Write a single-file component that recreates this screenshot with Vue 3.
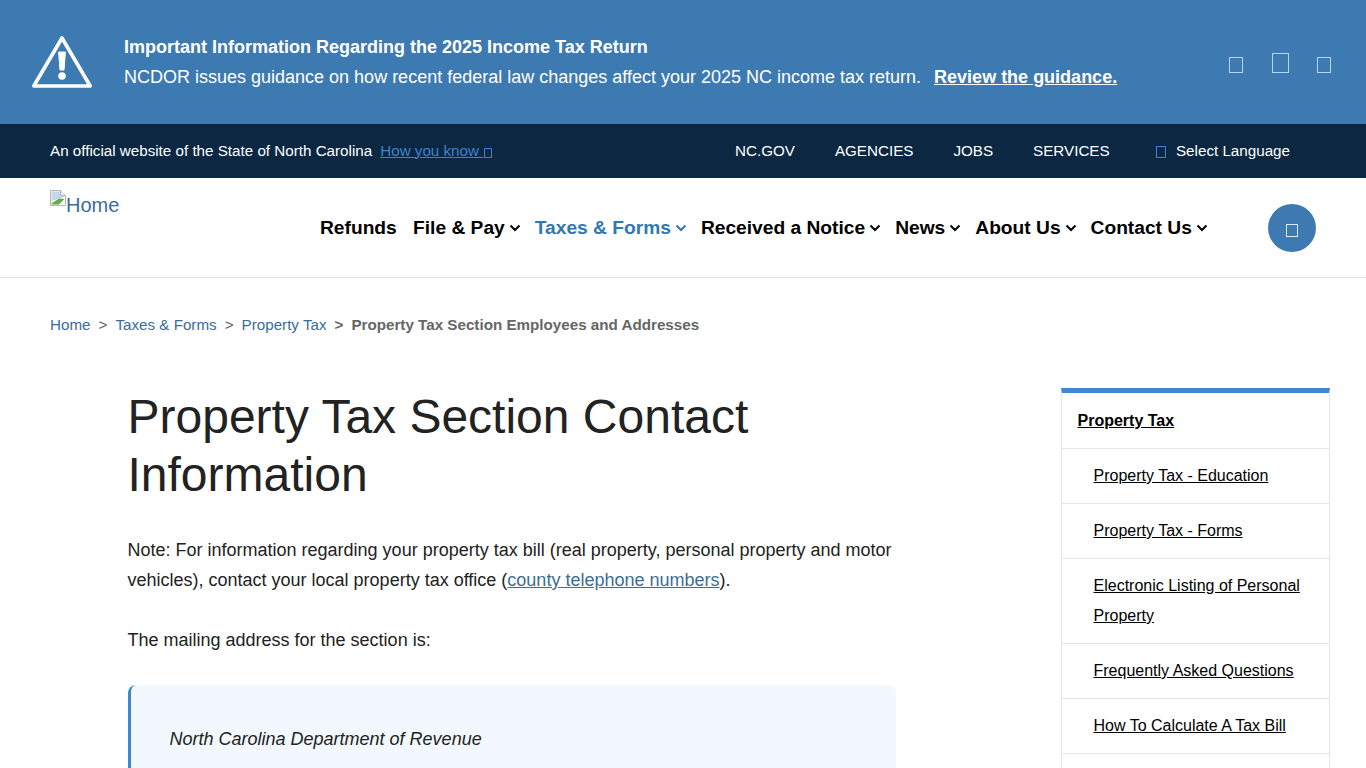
<template>
  <div class="page">
    <section class="alert">
      <svg class="alert-icon" width="62" height="54" viewBox="0 0 62 54">
        <path d="M31 3 L59.2 51 L2.8 51 Z" fill="none" stroke="#fff" stroke-width="3.6" stroke-linejoin="round" />
        <path d="M27.6 17 h6.8 l-1.4 18 h-4 z" fill="#fff" stroke="#fff" stroke-width="1" stroke-linejoin="round" />
        <circle cx="31" cy="41" r="3.8" fill="#fff" />
      </svg>
      <div class="alert-text">
        <div class="alert-title">Important Information Regarding the 2025 Income Tax Return</div>
        <div class="alert-body">
          NCDOR issues guidance on how recent federal law changes affect your 2025 NC income tax return.
          <a class="alert-link">Review the guidance.</a>
        </div>
      </div>
      <div class="alert-controls">
        <span class="glyph glyph-alert"></span>
        <span class="glyph glyph-alert glyph-big"></span>
        <span class="glyph glyph-alert"></span>
      </div>
    </section>

    <div class="topbar">
      <div class="official">
        <span>An official website of the State of North Carolina</span>
        <a class="know">How you know <span class="glyph glyph-know"></span></a>
      </div>
      <div class="toplinks">
        <a v-for="link in topLinks" :key="link">{{ link }}</a>
      </div>
      <div class="lang">
        <span class="glyph glyph-lang"></span>
        <span>Select Language</span>
      </div>
    </div>

    <header class="header">
      <a class="logo">
        <svg class="broken" width="16" height="16" viewBox="0 0 16 16">
          <path d="M0.5 0.5 H10.5 L15.5 5.5 V15.5 H0.5 Z" fill="#fff" stroke="#b5b5b5" />
          <path d="M10.5 0.5 V5.5 H15.5" fill="#f2f2f2" stroke="#b5b5b5" />
          <path d="M1.5 1.5 H10 V6 H14.5 V7 L1.5 11 Z" fill="#c6d5ea" />
          <path d="M1.5 14.5 V13.5 L9 8.5 L14.5 9 L9 14.5 Z" fill="#5fae4a" />
        </svg><span>Home</span>
      </a>
      <nav class="nav">
        <a v-for="item in navItems" :key="item.label" class="nav-item" :class="{ active: item.active }">
          {{ item.label }}
          <svg v-if="item.menu" width="12" height="8" viewBox="0 0 12 8">
            <path d="M1.5 1.5 L6 6 L10.5 1.5" fill="none" stroke="currentColor" stroke-width="2" />
          </svg>
        </a>
      </nav>
      <button class="search"><span class="glyph glyph-search"></span></button>
    </header>

    <div class="crumbs">
      <a>Home</a><i>&gt;</i>
      <a>Taxes &amp; Forms</a><i>&gt;</i>
      <a>Property Tax</a><i class="strong">&gt;</i>
      <b>Property Tax Section Employees and Addresses</b>
    </div>

    <div class="content">
      <main class="main">
        <h1>Property Tax Section Contact Information</h1>
        <p>
          Note: For information regarding your property tax bill (real property, personal property and motor
          vehicles), contact your local property tax office (<a>county telephone numbers</a>).
        </p>
        <p>The mailing address for the section is:</p>
        <blockquote>
          <em>North Carolina Department of Revenue</em>
        </blockquote>
      </main>
      <aside class="side">
        <a class="side-item side-head"><span>Property Tax</span></a>
        <a v-for="item in sideItems" :key="item" class="side-item"><span>{{ item }}</span></a>
      </aside>
    </div>
  </div>
</template>

<script setup>
const topLinks = ['NC.GOV', 'AGENCIES', 'JOBS', 'SERVICES']

const navItems = [
  { label: 'Refunds' },
  { label: 'File & Pay', menu: true },
  { label: 'Taxes & Forms', menu: true, active: true },
  { label: 'Received a Notice', menu: true },
  { label: 'News', menu: true },
  { label: 'About Us', menu: true },
  { label: 'Contact Us', menu: true },
]

const sideItems = [
  'Property Tax - Education',
  'Property Tax - Forms',
  'Electronic Listing of Personal Property',
  'Frequently Asked Questions',
  'How To Calculate A Tax Bill',
]
</script>

<style>
html,
body {
  margin: 0;
  overflow: hidden;
}
</style>

<style scoped>
.page {
  height: 768px;
  overflow: hidden;
  background: #fff;
  color: #222;
  font-family: "Liberation Sans", Arial, sans-serif;
}

a {
  cursor: pointer;
}

.glyph {
  display: inline-block;
  box-sizing: border-box;
  border: 1px solid currentColor;
}

.alert {
  height: 124px;
  box-sizing: border-box;
  display: flex;
  align-items: center;
  padding: 0 35px 0 31px;
  background: #3e7ab2;
  color: #fff;
}

.alert-icon {
  flex: none;
  margin-right: 31px;
}

.alert-text {
  flex: 1;
  font-size: 18px;
  line-height: 30px;
}

.alert-title {
  font-weight: 700;
}

.alert-link {
  margin-left: 8px;
  font-weight: 700;
  text-decoration: underline;
}

.alert-controls {
  display: flex;
  align-items: flex-end;
  gap: 28.5px;
  height: 20px;
  margin-top: 2px;
  color: #b4d6f2;
}

.glyph-alert {
  width: 14px;
  height: 16px;
  border-width: 1.5px;
}

.glyph-big {
  width: 17px;
  height: 20px;
}

.topbar {
  height: 54px;
  box-sizing: border-box;
  display: flex;
  align-items: center;
  padding: 0 76px 2px 50px;
  background: #0b2742;
  color: #fff;
  font-size: 15.2px;
}

.official {
  display: flex;
  align-items: center;
  gap: 8px;
  width: 685px;
}

.know {
  color: #3f82cf;
  text-decoration: underline;
}

.glyph-know {
  width: 8px;
  height: 10px;
  margin-left: 1px;
  vertical-align: -2px;
}

.toplinks {
  display: flex;
  gap: 40px;
}

.lang {
  margin-left: auto;
  display: flex;
  align-items: center;
  gap: 10px;
}

.glyph-lang {
  width: 10px;
  height: 12px;
  margin-top: 4px;
  color: #3f82cf;
}

.header {
  height: 100px;
  box-sizing: border-box;
  display: flex;
  padding: 0 50px;
  border-bottom: 1px solid #dee2e6;
}

.logo {
  width: 270px;
  padding-top: 12px;
  color: #3a6d99;
  font-size: 20px;
  line-height: 30px;
}

.broken {
  vertical-align: 6px;
}

.nav {
  display: flex;
  align-items: center;
  gap: 14px;
  height: 99px;
}

.nav-item {
  display: flex;
  align-items: center;
  gap: 4px;
  color: #000;
  font-size: 19.2px;
  font-weight: 700;
}

.nav-item:first-child {
  margin-right: 2.3px;
}

.nav-item.active {
  color: #2f78b4;
}

.search {
  width: 48px;
  height: 48px;
  margin: 26px 0 0 auto;
  padding: 0;
  border: 0;
  border-radius: 50%;
  background: #3e7ab2;
  color: #dbe9f5;
}

.glyph-search {
  width: 12px;
  height: 13px;
  margin-top: 8px;
}

.crumbs {
  display: flex;
  align-items: center;
  height: 20px;
  margin-top: 36px;
  padding-left: 50px;
  font-size: 15.2px;
  color: #3a6d99;
}

.crumbs i {
  margin: 0 8px;
  font-style: normal;
  color: #666;
}

.crumbs i.strong {
  font-weight: 700;
}

.crumbs b {
  color: #666;
}

.content {
  display: flex;
  margin-top: 54px;
  padding: 0 36px 0 127.5px;
}

.main {
  width: 768.5px;
}

h1 {
  margin: 0 0 31px;
  font-size: 48px;
  font-weight: 400;
  line-height: 58px;
}

p {
  margin: 0 0 30px;
  font-size: 18px;
  line-height: 30px;
}

p a {
  color: #3a6d99;
  text-decoration: underline;
}

blockquote {
  margin: 0;
  padding: 39px 39px;
  border-left: 3px solid #3f87d4;
  border-radius: 8px;
  background: #f2f8fd;
  font-size: 18px;
  line-height: 30px;
}

.side {
  width: 269px;
  margin-left: auto;
  box-sizing: border-box;
  border: 1px solid #e3e6e8;
  border-top: 5px solid #3f87d4;
}

.side-item {
  display: block;
  padding: 12px 16px 12px 31.5px;
  border-bottom: 1px solid #e3e6e8;
  color: #000;
  font-size: 16px;
  line-height: 30px;
  text-decoration: underline;
}

.side-head {
  padding: 13px 16px 12px 15.5px;
  font-weight: 700;
}
</style>
